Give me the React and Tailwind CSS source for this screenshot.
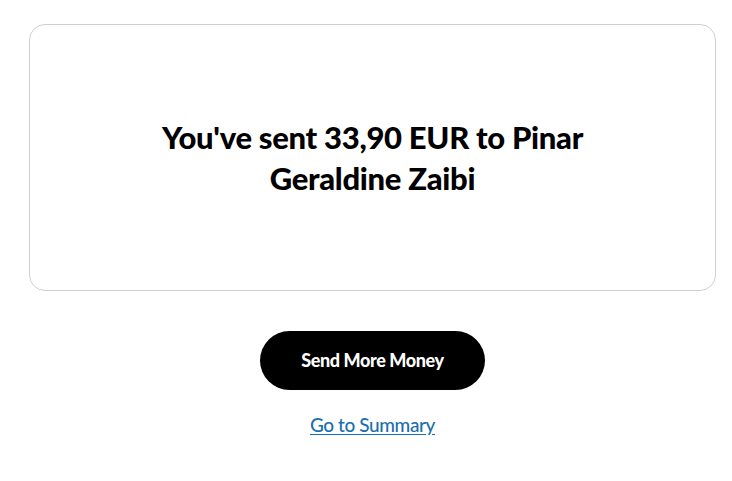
import React from 'react';

function App() {
  return (
    <div className="min-h-[481px] bg-white pl-[29px] pr-4 pt-6 font-['Lato','Liberation_Sans',sans-serif]">
      <div className="flex h-[267px] items-center justify-center rounded-2xl border border-[#cfcfcf] px-8">
        <h1 className="max-w-[440px] text-center text-[31px] font-black leading-[41px] tracking-[-0.3px] text-black">
          You've sent 33,90 EUR to Pinar Geraldine Zaibi
        </h1>
      </div>

      <div className="mt-10 flex flex-col items-center">
        <button className="flex h-[59px] w-[225px] items-center justify-center rounded-full bg-black text-[18px] font-black tracking-[-0.4px] text-white">
          Send More Money
        </button>
        <a
          href="#"
          className="mt-[21px] text-[19px] font-medium tracking-[-0.4px] text-[#1a6fae] underline underline-offset-2"
        >
          Go to Summary
        </a>
      </div>
    </div>
  );
}

export default App;
